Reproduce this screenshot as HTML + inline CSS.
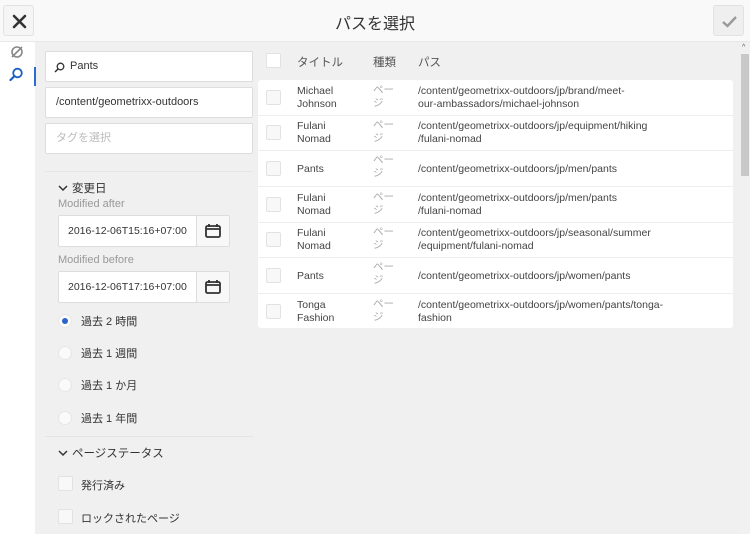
<!DOCTYPE html>
<html><head><meta charset="utf-8"><style>
*{box-sizing:border-box;margin:0;padding:0}
body{width:750px;height:534px;overflow:hidden;background:#f0f0f0;font-family:"Liberation Sans","Noto Sans CJK JP",sans-serif;color:#4b4b4b;font-size:11px;position:relative}
.hdr{position:absolute;left:0;top:0;width:750px;height:42px;background:#f9f9f9;border-bottom:1px solid #e8e8e8}
.title{position:absolute;left:0;width:750px;top:10px;text-align:center;font-size:16px;color:#333}
.btn{position:absolute;top:5px;width:31px;height:31px;border-radius:3px;background:#f3f3f3;border:1px solid #e2e2e2}
.rail{position:absolute;left:0;top:42px;width:35px;height:492px;background:#fff}
.side{position:absolute;left:36px;top:42px;width:217px;height:492px;background:#f0f0f0}
.inp{position:absolute;left:45px;width:208px;height:31px;background:#fff;border:1px solid #ddd;border-radius:2px;padding-left:10px;line-height:29px;font-size:11px;color:#333}
.lbl{position:absolute;left:58px;font-size:11px;color:#999}
.date{position:absolute;left:58px;width:172px;height:32px;background:#fff;border:1px solid #ddd;border-radius:2px}
.date span{position:absolute;left:9px;top:9px;font-size:10.5px;color:#333}
.date i{position:absolute;right:0;top:0;width:33px;height:30px;border-left:1px solid #ddd;background:#f8f8f8}
.radio{position:absolute;left:58px;width:14px;height:14px;border-radius:50%;background:#fafafa;border:1px solid #e6e6e6}
.rt{position:absolute;left:81px;font-size:11px;color:#333}
.cb{position:absolute;width:15px;height:15px;background:#f8f8f8;border:1px solid #e2e2e2;border-radius:2px}
.sec{position:absolute;left:58px;font-size:11.5px;color:#333}
.rows{position:absolute;left:258px;top:80px;width:475px;height:248px;background:#fff;border-radius:3px}
.row{position:absolute;left:0;width:475px;border-bottom:1px solid #eee;height:36px}
.row .t{position:absolute;left:39px;font-size:10.5px;line-height:13px;color:#444}
.row .k{position:absolute;left:115px;font-size:10.5px;line-height:13px;color:#aaa}
.row .p{position:absolute;left:160px;font-size:10.5px;line-height:13px;color:#444}
.row .cb{left:8px;top:10px}
.th{position:absolute;top:54px;font-size:11.5px;color:#555}
</style></head><body>
<div class="hdr">
 <div class="btn" style="left:3px;background:#f5f5f5"><svg width="31" height="31" viewBox="0 0 31 31"><path d="M10 10L21 21M21 10L10 21" stroke="#333" stroke-width="2.6" stroke-linecap="round"/></svg></div>
 <div class="title">パスを選択</div>
 <div class="btn" style="left:713px;background:#efefef"><svg width="31" height="31" viewBox="0 0 31 31"><path d="M9 16L13.5 20L22 11" stroke="#999" stroke-width="2.4" fill="none"/></svg></div>
</div>
<div class="rail">
 <svg style="position:absolute;left:10px;top:3px" width="14" height="14" viewBox="0 0 14 14"><circle cx="7" cy="7" r="5" fill="none" stroke="#888" stroke-width="1.6"/><path d="M2 12L12 2" stroke="#888" stroke-width="1.6"/></svg>
 <svg style="position:absolute;left:9px;top:25px" width="15" height="15" viewBox="0 0 15 15"><circle cx="8.5" cy="6" r="4.3" fill="none" stroke="#1a5fc2" stroke-width="1.8"/><path d="M5.5 9L1.5 13" stroke="#1a5fc2" stroke-width="2.2" stroke-linecap="round"/></svg>
 <div style="position:absolute;left:34px;top:25px;width:2px;height:19px;background:#2d6ad1"></div>
</div>
<div class="side"></div>
<div class="inp" style="top:51px;padding-left:24px">Pants<svg style="position:absolute;left:8px;top:10px" width="11" height="11" viewBox="0 0 11 11"><circle cx="6.5" cy="4.5" r="3.3" fill="none" stroke="#333" stroke-width="1.3"/><path d="M4 7L1 10" stroke="#333" stroke-width="1.5"/></svg></div>
<div class="inp" style="top:87px">/content/geometrixx-outdoors</div>
<div class="inp" style="top:123px;color:#bbb">タグを選択</div>
<div style="position:absolute;left:45px;top:171px;width:208px;height:1px;background:#e6e6e6"></div>
<div class="sec" style="top:180px"><svg width="10" height="8" viewBox="0 0 10 8" style="margin-right:4px"><path d="M1 2L5 6L9 2" stroke="#333" stroke-width="1.5" fill="none"/></svg>変更日</div>
<div class="lbl" style="top:198px">Modified after</div>
<div class="date" style="top:215px"><span>2016-12-06T15:16+07:00</span><i><svg style="margin:8px 0 0 8px" width="16" height="14" viewBox="0 0 16 14"><rect x="1" y="2" width="14" height="11" rx="1.5" fill="none" stroke="#333" stroke-width="1.8"/><path d="M1 5H15M4 0V3M12 0V3" stroke="#333" stroke-width="1.8"/></svg></i></div>
<div class="lbl" style="top:254px">Modified before</div>
<div class="date" style="top:271px"><span>2016-12-06T17:16+07:00</span><i><svg style="margin:8px 0 0 8px" width="16" height="14" viewBox="0 0 16 14"><rect x="1" y="2" width="14" height="11" rx="1.5" fill="none" stroke="#333" stroke-width="1.8"/><path d="M1 5H15M4 0V3M12 0V3" stroke="#333" stroke-width="1.8"/></svg></i></div>
<div class="radio" style="top:314px"><div style="width:6px;height:6px;border-radius:50%;background:#2a63c8;margin:3px"></div></div><div class="rt" style="top:313px">過去 2 時間</div>
<div class="radio" style="top:346px"></div><div class="rt" style="top:345px">過去 1 週間</div>
<div class="radio" style="top:378px"></div><div class="rt" style="top:377px">過去 1 か月</div>
<div class="radio" style="top:411px"></div><div class="rt" style="top:410px">過去 1 年間</div>
<div style="position:absolute;left:45px;top:436px;width:208px;height:1px;background:#e4e4e4"></div>
<div class="sec" style="top:445px"><svg width="10" height="8" viewBox="0 0 10 8" style="margin-right:4px"><path d="M1 2L5 6L9 2" stroke="#333" stroke-width="1.5" fill="none"/></svg>ページステータス</div>
<div class="cb" style="left:58px;top:476px"></div><div class="rt" style="top:477px">発行済み</div>
<div class="cb" style="left:58px;top:509px"></div><div class="rt" style="top:510px">ロックされたページ</div>

<div class="cb" style="left:266px;top:53px;background:#fff"></div>
<div class="th" style="left:297px">タイトル</div>
<div class="th" style="left:373px">種類</div>
<div class="th" style="left:418px">パス</div>
<div class="rows">
 <div class="row" style="top:0"><div class="cb"></div><div class="t" style="top:5px">Michael<br>Johnson</div><div class="k" style="top:4px">ペー<br>ジ</div><div class="p" style="top:5px">/content/geometrixx-outdoors/jp/brand/meet-<br>our-ambassadors/michael-johnson</div></div>
 <div class="row" style="top:35px"><div class="cb"></div><div class="t" style="top:5px">Fulani<br>Nomad</div><div class="k" style="top:4px">ペー<br>ジ</div><div class="p" style="top:5px">/content/geometrixx-outdoors/jp/equipment/hiking<br>/fulani-nomad</div></div>
 <div class="row" style="top:71px"><div class="cb"></div><div class="t" style="top:12px">Pants</div><div class="k" style="top:3px">ペー<br>ジ</div><div class="p" style="top:12px">/content/geometrixx-outdoors/jp/men/pants</div></div>
 <div class="row" style="top:107px"><div class="cb"></div><div class="t" style="top:5px">Fulani<br>Nomad</div><div class="k" style="top:4px">ペー<br>ジ</div><div class="p" style="top:5px">/content/geometrixx-outdoors/jp/men/pants<br>/fulani-nomad</div></div>
 <div class="row" style="top:142px"><div class="cb"></div><div class="t" style="top:5px">Fulani<br>Nomad</div><div class="k" style="top:4px">ペー<br>ジ</div><div class="p" style="top:5px">/content/geometrixx-outdoors/jp/seasonal/summer<br>/equipment/fulani-nomad</div></div>
 <div class="row" style="top:178px"><div class="cb"></div><div class="t" style="top:12px">Pants</div><div class="k" style="top:3px">ペー<br>ジ</div><div class="p" style="top:12px">/content/geometrixx-outdoors/jp/women/pants</div></div>
 <div class="row" style="top:214px;border:0"><div class="cb"></div><div class="t" style="top:5px">Tonga<br>Fashion</div><div class="k" style="top:4px">ペー<br>ジ</div><div class="p" style="top:5px">/content/geometrixx-outdoors/jp/women/pants/tonga-<br>fashion</div></div>
</div>
<div style="position:absolute;left:740px;top:42px;width:10px;height:492px;background:#f1f1f1"></div>
<div style="position:absolute;left:741px;top:54px;width:8px;height:122px;background:#c8c8c8"></div>
<div style="position:absolute;left:742px;top:44px;font-size:7px;color:#555">^</div>
</body></html>
